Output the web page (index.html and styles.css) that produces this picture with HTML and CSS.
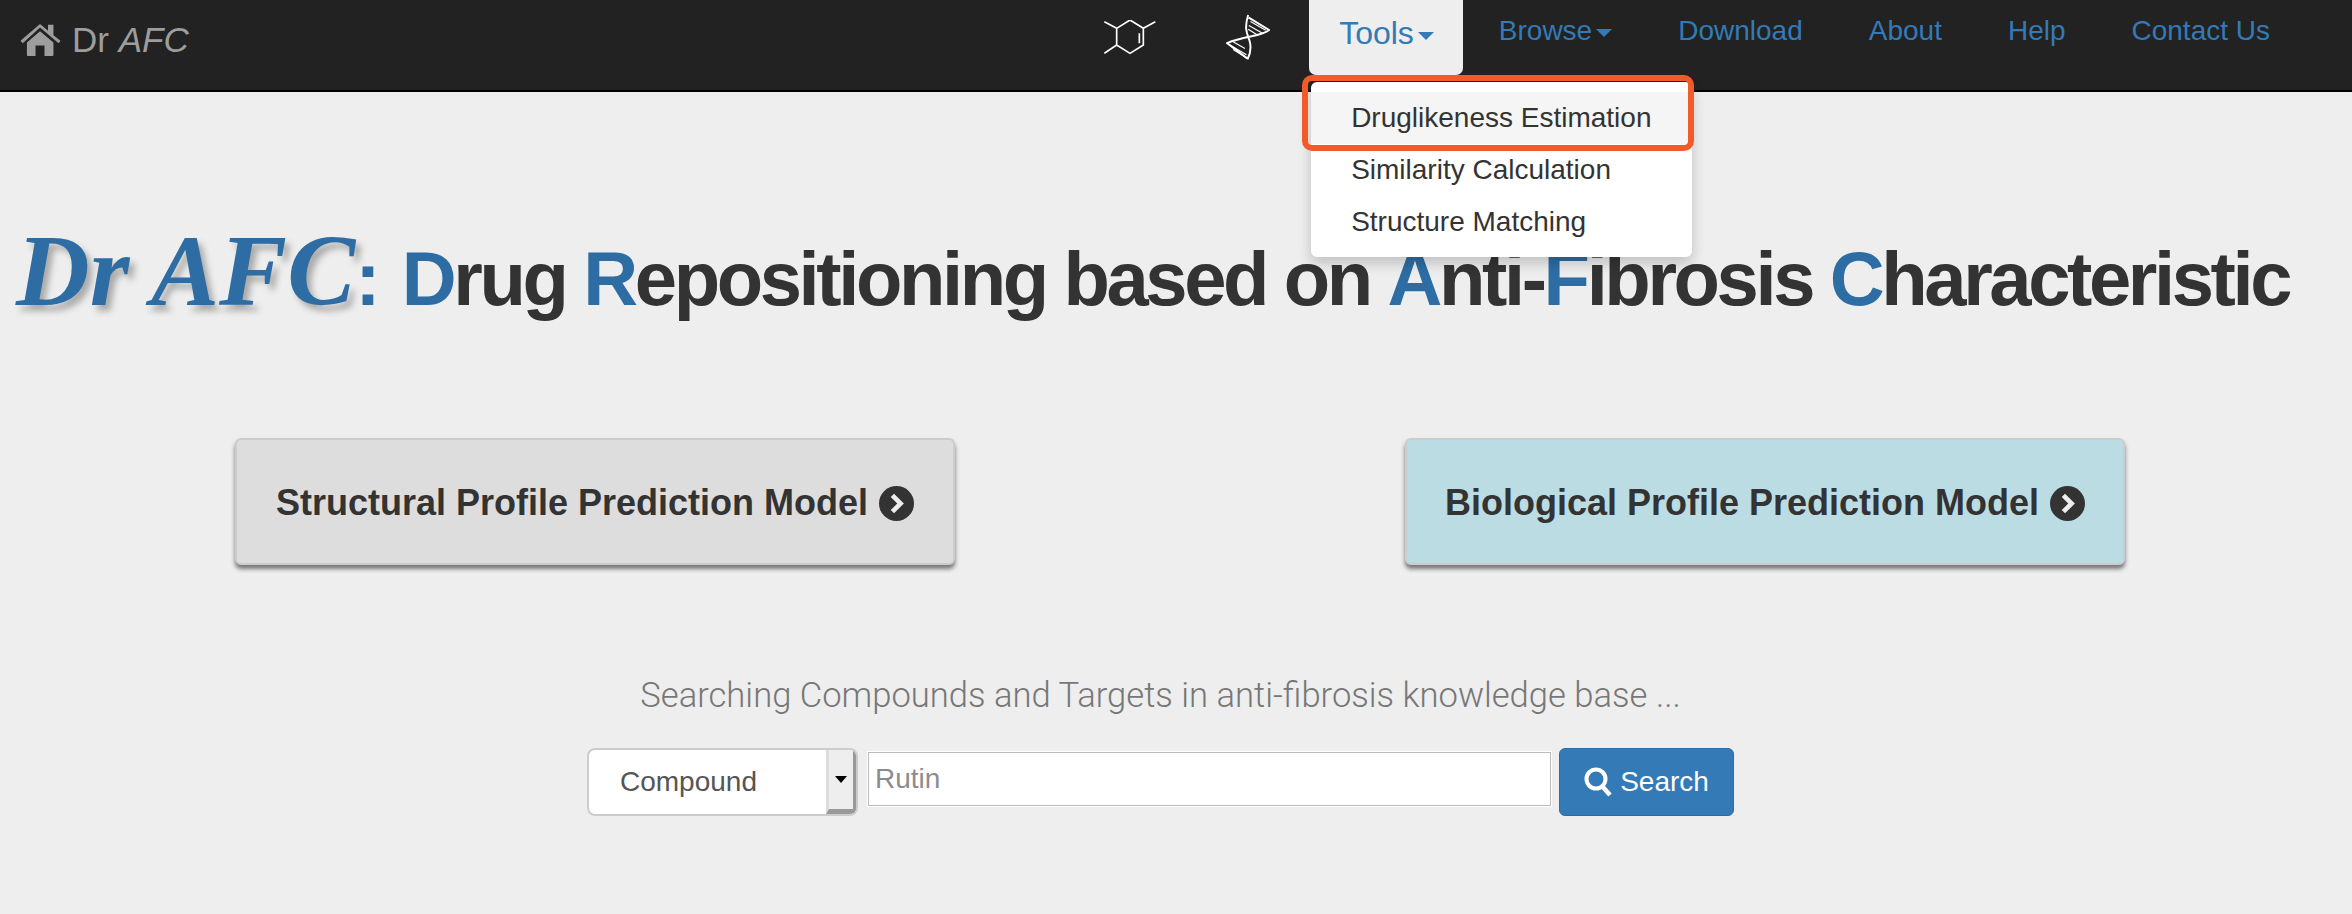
FILE: index.html
```html
<html>
    <head>
        <title>Dr AFC</title>
        <meta charset="utf-8">
        <link rel="stylesheet" href="styles.css">
    </head>
    <body>
        <nav class="navbar">
            <a class="brand" href="#">
                <svg class="icon-home" viewBox="0 0 125 100"><path d="M0 52 61 0 86 21V2h17v33l22 17-6 8-58-49L7 60zM20 58 61 23l42 35v39q0 3-3 3H75V67H47v33H23q-3 0-3-3z"/></svg>
                <span>Dr <em>AFC</em></span>
            </a>
            <ul class="nav">
                <li><a class="nav-icon" href="#">
                    <svg class="icon-mol" viewBox="0 0 156 105"><path d="M38 25 78 0 118 25V75L78 100 38 75ZM38 25 1 5M38 75 1 100M118 25 154 5M106 40V70" fill="none" stroke="#fff" stroke-width="5"/></svg>
                </a></li>
                <li><a class="nav-icon nav-icon-dna" href="#">
                    <svg class="icon-dna" viewBox="500 40 135 142"><g fill="none" stroke="#fff"><path d="M568 42C555 85 565 100 572 120 578 140 575 160 566 178M570 50 632 88C610 108 560 105 503 128L565 175" stroke-width="6"/><path d="M575 62 622 89M570 74 612 98M568 86 598 104M522 124 558 145M512 134 563 164M522 148 560 172" stroke-width="3.5"/></g></svg>
                </a></li>
                <li class="open">
                    <a class="tab" href="#">Tools<i class="caret"></i></a>
                    <ul class="dropdown">
                        <li class="marked"><a href="#">Druglikeness Estimation</a></li>
                        <li><a href="#">Similarity Calculation</a></li>
                        <li><a href="#">Structure Matching</a></li>
                    </ul>
                </li>
                <li><a href="#">Browse<i class="caret"></i></a></li>
                <li><a href="#">Download</a></li>
                <li><a href="#">About</a></li>
                <li><a href="#">Help</a></li>
                <li><a href="#">Contact Us</a></li>
            </ul>
        </nav>
        <main>
            <h1><em class="logo">Dr AFC</em><b class="colon">:</b> <b>D</b>rug <b>R</b>epositioning based on <b>A</b>nti-<b>F</b>ibrosis <b>C</b>haracteristic</h1>
            <section class="models">
                <a class="model model-gray" href="#">Structural Profile Prediction Model
                    <svg class="icon-go" viewBox="0 0 34 34"><circle cx="17" cy="17" r="17"/><path d="M13 9 21 17 13 25" fill="none" stroke="#eee" stroke-width="4.5"/></svg>
                </a>
                <a class="model model-blue" href="#">Biological Profile Prediction Model
                    <svg class="icon-go" viewBox="0 0 34 34"><circle cx="17" cy="17" r="17"/><path d="M13 9 21 17 13 25" fill="none" stroke="#eee" stroke-width="4.5"/></svg>
                </a>
            </section>
            <p class="lead">Searching Compounds and Targets in anti-fibrosis knowledge base ...</p>
            <form class="search">
                <div class="select">
                    <span class="select-value">Compound</span>
                    <span class="select-arrow"></span>
                </div>
                <input type="text" placeholder="Rutin">
                <button type="button">
                    <svg class="icon-search" viewBox="0 0 28 30"><circle cx="12" cy="12" r="9.5" fill="none" stroke="#fff" stroke-width="4"/><path d="M18 19 26 28" stroke="#fff" stroke-width="4.5"/></svg>
                    Search
                </button>
            </form>
        </main>
    </body>
</html>
```

FILE: styles.css
```css
body{
    margin: 0;
    background-color: #eee;
    color: #333;
    font-family: "Liberation Sans", Arial, sans-serif;
}
a{
    text-decoration: none;
}
ul{
    margin: 0;
    padding: 0;
    list-style: none;
}
.navbar{
    display: flex;
    justify-content: space-between;
    height: 90px;
    padding-right: 49px;
    background-color: #222;
    border-bottom: 2px solid #000;
}
.brand{
    display: flex;
    align-items: center;
    height: 80px;
    padding-left: 20px;
    color: #9d9d9d;
    font-size: 35px;
}
.brand em{
    font-style: italic;
}
.icon-home{
    width: 41px;
    height: 32px;
    margin-right: 11px;
    fill: #9d9d9d;
}
.nav{
    display: flex;
}
.nav > li > a{
    display: flex;
    align-items: center;
    height: 62px;
    padding: 0 33px;
    color: #337ab7;
    font-size: 28px;
}
.nav > li > a.nav-icon{
    height: 74px;
    padding: 0 38px 0 32px;
}
.nav > li > a.nav-icon-dna{
    padding: 0 39px 0 32px;
}
.icon-mol{
    width: 52px;
    height: 35px;
}
.icon-dna{
    width: 44px;
    height: 47px;
}
.open{
    position: relative;
    margin-right: 3px;
}
.nav > li > a.tab{
    box-sizing: border-box;
    height: 75px;
    padding: 0 29px 8px 30px;
    border-radius: 0 0 7px 7px;
    background-color: #eee;
    font-size: 32px;
}
.caret{
    display: inline-block;
    margin-left: 4px;
    margin-top: 4px;
    border-top: 8px solid #337ab7;
    border-left: 8px solid transparent;
    border-right: 8px solid transparent;
}
.dropdown{
    position: absolute;
    top: 82px;
    left: 2px;
    width: 381px;
    padding: 10px 0 9px;
    background-color: #fff;
    border-radius: 6px;
    box-shadow: 0 6px 14px rgba(0,0,0,0.2);
}
.dropdown li{
    position: relative;
    height: 52px;
    line-height: 52px;
    padding-left: 40px;
}
.dropdown a{
    color: #333;
    font-size: 28px;
}
.marked{
    background-color: #f5f5f5;
}
.marked:after{
    content: "";
    position: absolute;
    top: -17px;
    bottom: -7px;
    left: -9px;
    right: -2px;
    border: 6px solid #f15a29;
    border-radius: 10px;
}
h1{
    margin: 133px 0 0;
    padding-left: 16px;
    font-size: 76px;
    letter-spacing: -3.4px;
    line-height: 92px;
    white-space: nowrap;
}
h1 b{
    color: #2e6da4;
}
h1 .colon{
    margin-right: 7px;
}
.logo{
    color: #2e6da4;
    font-family: "Liberation Serif", "Times New Roman", serif;
    font-size: 102px;
    letter-spacing: 0;
    text-shadow: 5px 6px 6px #aaa;
}
.models{
    display: flex;
    justify-content: center;
    gap: 450px;
    margin-top: 113px;
    padding-left: 8px;
}
.model{
    display: flex;
    align-items: center;
    justify-content: center;
    gap: 11px;
    box-sizing: border-box;
    width: 720px;
    height: 127px;
    padding-top: 3px;
    border: 2px solid #ccc;
    border-radius: 6px;
    box-shadow: 0 4px 4px #777;
    color: #333;
    font-size: 36px;
    font-weight: bold;
}
.model-gray{
    background-color: #ddd;
}
.model-blue{
    background-color: #bcdce3;
}
.icon-go{
    width: 35px;
    height: 35px;
    fill: #333;
}
.lead{
    margin: 106px 0 0;
    padding-right: 31px;
    color: #777;
    font-family: Roboto, "Liberation Sans", sans-serif;
    font-size: 34.6px;
    font-weight: 300;
    line-height: 48px;
    text-align: center;
}
.search{
    display: flex;
    align-items: center;
    justify-content: center;
    margin: 29px 0 0;
    padding-right: 31px;
}
.select{
    display: flex;
    box-sizing: border-box;
    width: 271px;
    height: 68px;
    border: 2px solid #ccc;
    border-radius: 8px;
    background-color: #fff;
    overflow: hidden;
}
.select-value{
    flex: 1;
    padding-left: 31px;
    color: #555;
    font-size: 28px;
    line-height: 64px;
}
.select-arrow{
    display: flex;
    align-items: center;
    justify-content: center;
    box-sizing: border-box;
    width: 30px;
    background-color: #eee;
    border-left: 3px solid #ddd;
    border-right: 3px solid #999;
    border-bottom: 5px solid #999;
}
.select-arrow:before{
    content: "";
    border-top: 7px solid #000;
    border-left: 6px solid transparent;
    border-right: 6px solid transparent;
}
input{
    box-sizing: border-box;
    width: 683px;
    height: 54px;
    margin: 0 8px 6px 10px;
    padding: 0 6px;
    border: 1px solid #bbb;
    outline: 1px solid #fff;
    font-family: "Liberation Sans", Arial, sans-serif;
    font-size: 28px;
    background-color: #fff;
}
input::placeholder{
    color: #8c8c8c;
}
button{
    display: flex;
    align-items: center;
    justify-content: center;
    gap: 8px;
    box-sizing: border-box;
    width: 175px;
    height: 68px;
    padding: 0;
    border: 1px solid #2e6da4;
    border-radius: 6px;
    background-color: #337ab7;
    color: #fff;
    font-family: "Liberation Sans", Arial, sans-serif;
    font-size: 28px;
}
.icon-search{
    width: 28px;
    height: 30px;
}
```
